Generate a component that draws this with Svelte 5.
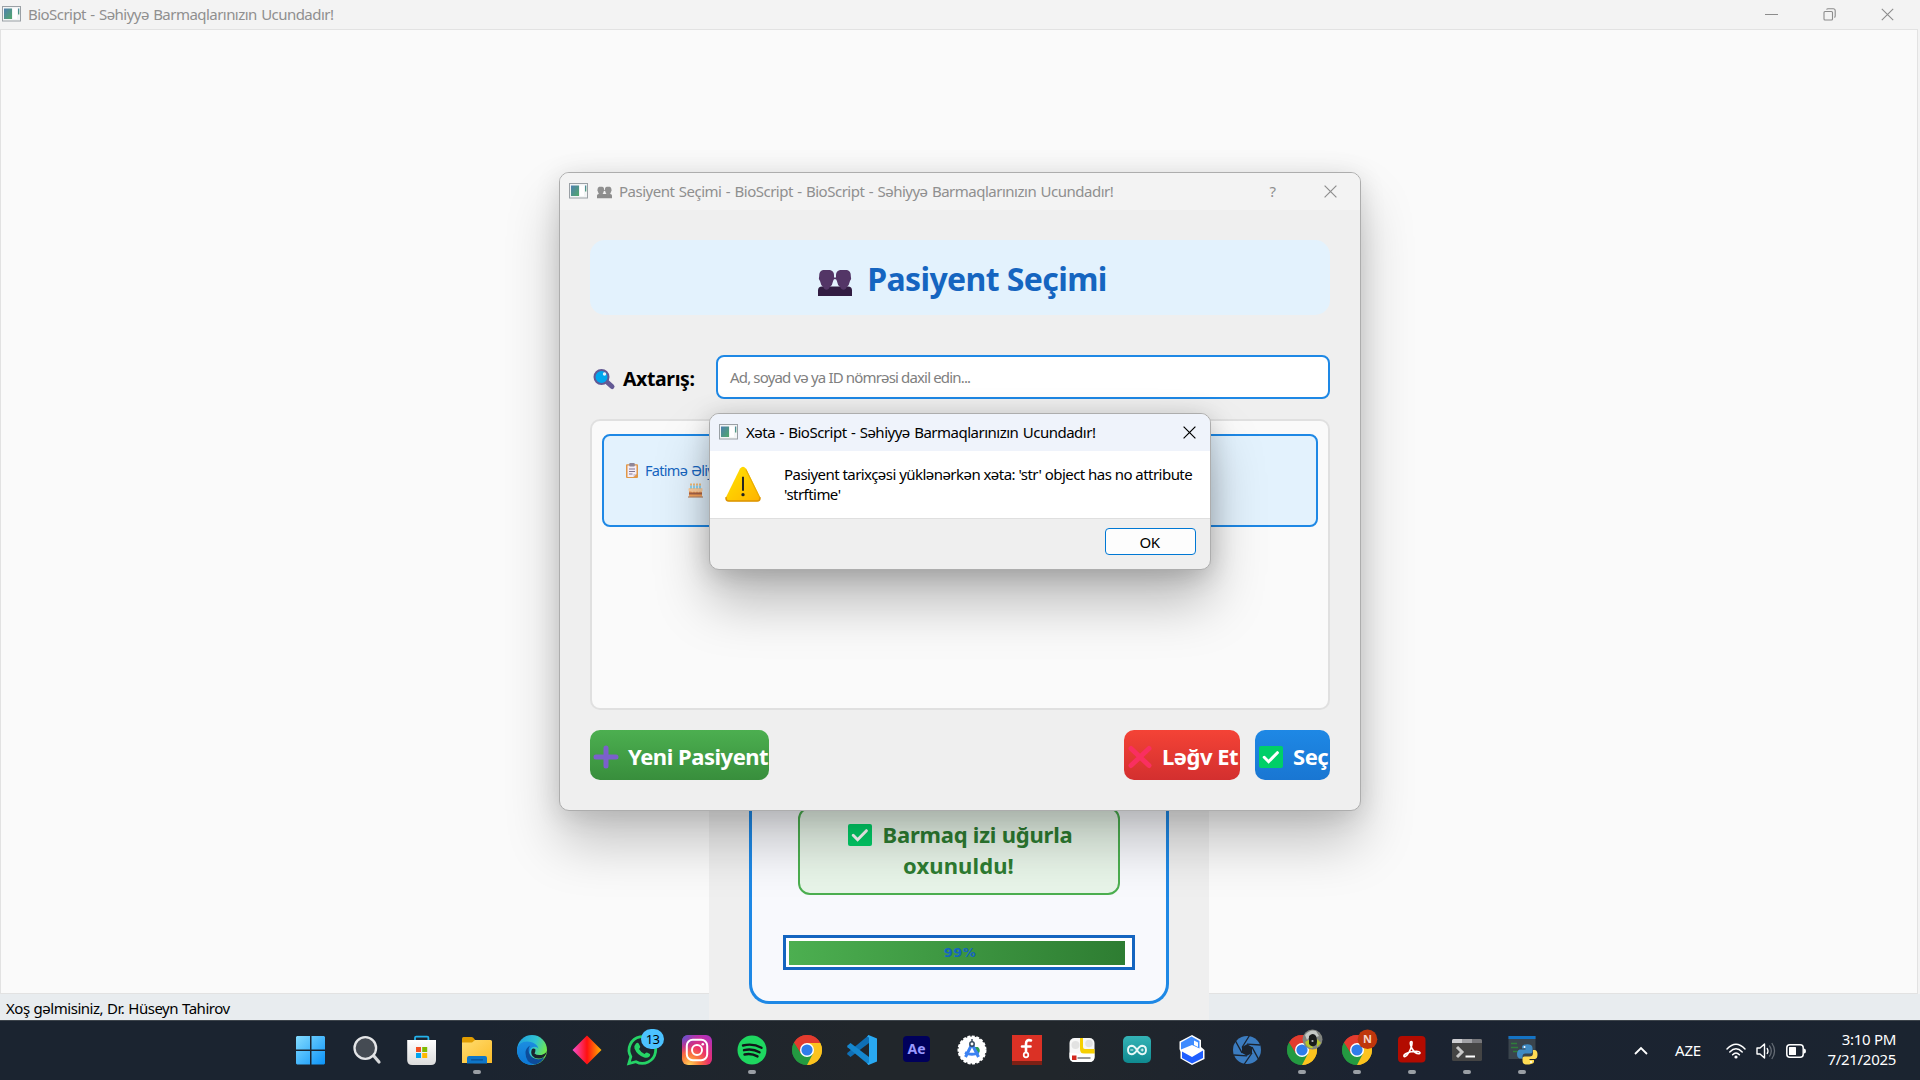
<script>
  const appTitle = 'BioScript - Səhiyyə Barmaqlarınızın Ucundadır!';
  const tasks = [
    { id: 'start' }, { id: 'search' }, { id: 'store' }, { id: 'files', open: true }, { id: 'edge' },
    { id: 'diamond' }, { id: 'whatsapp' }, { id: 'instagram' }, { id: 'spotify', open: true },
    { id: 'chrome' }, { id: 'vscode' }, { id: 'ae' }, { id: 'studio' }, { id: 'fritzing' },
    { id: 'lego' }, { id: 'arduino' }, { id: 'boxes' }, { id: 'aperture' },
    { id: 'chromePhoto', open: true }, { id: 'chromeN', open: true }, { id: 'acrobat', open: true },
    { id: 'terminal', open: true }, { id: 'python', open: true }
  ];
</script>

{#snippet winIcon()}
  <svg class="win-icon" viewBox="0 0 19 16">
    <rect x=".5" y=".5" width="18" height="14.5" fill="#f3f5f6" stroke="#9aa0a5" />
    <rect x="2" y="2.5" width="8" height="10.5" fill="url(#wi)" />
    <rect x="11" y="2.5" width="4" height="10.5" fill="#fff" />
    <rect x="16" y="2.5" width="1.3" height="6" fill="url(#wi)" />
  </svg>
{/snippet}

{#snippet people(head, body)}
  <svg class="people" viewBox="0 0 34 26">
    <path d="M0 26v-5.500q0-4 4-4h26q4 0 4 4V26z" fill={body} />
    <path d="M5 0h7q4 1 4 5v2.500h2V5q0-4 4-5h7q4 1 3.800 6 1 3-.8 5-.8 4.500-3.500 6.500l-1 1.500q-2 1.500-4 0l-1-1.500q-3-2-3.600-6.500-.4-2-2-2-1.300 0-1.800 2-.6 4.500-3.600 6.500l-1 1.500q-2 1.500-4 0l-1-1.500Q2.800 15.500 2 11 .2 9 1.200 6 1 1 5 0z" fill={head} />
  </svg>
{/snippet}

{#snippet check()}
  <svg class="emoji" viewBox="0 0 24 22">
    <rect width="24" height="22" rx="2" fill="#00cf68" />
    <path d="M5.200 11.300l4.400 4.400 8.800-9" fill="none" stroke="#fff" stroke-width="3" stroke-linecap="round" />
  </svg>
{/snippet}

{#snippet cross()}
  <svg class="close" viewBox="0 0 13 13"><path d="M.6 .6l11.800 11.800M12.400 .6L.6 12.400" fill="none" stroke="currentColor" stroke-width="1.200" /></svg>
{/snippet}

{#snippet chromeLogo()}
  <path d="M15 15L2.010 7.500A15 15 0 0 1 27.990 7.500z" fill="#e33b2e" />
  <path d="M15 15L27.990 7.500A15 15 0 0 1 15 30z" fill="#fcc31e" />
  <path d="M15 15L15 30A15 15 0 0 1 2.010 7.500z" fill="#1e8e3e" />
  <path d="M15 8h13.280A15 15 0 0 1 15 30l6.060-11.500z" fill="#fcc31e" />
  <path d="M21.060 18.500L15 30A15 15 0 0 1 2.010 7.500l6.930 11z" fill="#249a41" />
  <path d="M8.940 18.500L2.010 7.500A15 15 0 0 1 28.280 8H15z" fill="#e33b2e" />
  <circle cx="15" cy="15" r="7" fill="#fff" />
  <circle cx="15" cy="15" r="5.600" fill="#2f7de9" />
{/snippet}

{#snippet taskIcon(id)}
  {#if id === 'start'}
    <path d="M0 1H13V14.500H-1V2zM14.500 1h12.500l1 1v12.500H14.500zM-1 16h14v13.500H0l-1-1zM14.500 16H28v12.500l-1 1H14.500z" fill="url(#gwin)" />
  {:else if id === 'search'}
    <path d="M21 20l6 7" stroke="#d6d8da" stroke-width="3.200" stroke-linecap="round" />
    <circle cx="13.300" cy="13" r="10.800" fill="#454b53" stroke="#e4e5e7" stroke-width="2.300" />
  {:else if id === 'store'}
    <path d="M8 6V2.800q0-1.200 1.200-1.200h11q1.200 0 1.200 1.200V6" fill="none" stroke="#24b3ec" stroke-width="1.800" />
    <path d="M.2 5h28.800v20q0 5-5 5H5.200q-5 0-5-5z" fill="url(#gstore)" />
    <rect x="9" y="12" width="5" height="5" fill="#f25022" /><rect x="15.200" y="12" width="5" height="5" fill="#7fba00" />
    <rect x="9" y="18" width="5" height="5" fill="#00a4ef" /><rect x="15.200" y="18" width="5" height="5" fill="#ffb900" />
  {:else if id === 'files'}
    <path d="M0 3.500Q0 2 1.500 2h8q1 0 1.800.8L14 6v6H0z" fill="#e09c00" />
    <path d="M0 7.500h10L13 5h15.500Q30 5 30 6.500V28H0z" fill="url(#gfold)" />
    <path d="M5 28.500V23q0-2 2-2h16q2 0 2 2v5.500z" fill="#0f76c8" /><path d="M9.500 24.800h11" stroke="#0a4f92" stroke-width="1.200" stroke-linecap="round" />
  {:else if id === 'edge'}
    <circle cx="15" cy="15" r="15" fill="url(#gedge1)" />
    <path d="M0 14Q2 6.500 10 6.500c7 0 11 4 11.500 7.500-1.500-3-7-3.500-8.500 1-2 6 2 12 9.500 12Q17 31 11 29.500 0 26.500 0 14z" fill="url(#gedge2)" />
    <path d="M8.500 18q0-5 4.500-7.500-2.500 4-.5 8.500 3 6 11 5l4-2q-3 6-9.500 7.700Q8.500 28 8.500 18z" fill="#0d4c9b" />
    <path d="M17.500 18.500q2.500 2.200 7 1.400 4-.8 5.300-3.900-1 6-5.500 7.200-6 1.200-8.800-2.200-2.300-3-.5-7 2-1 3.500.5 0 2-1 4z" fill="#1b232d" />
  {:else if id === 'diamond'}
    <path d="M15 .5L29.500 15 15 29.500.5 15z" fill="url(#gdia)" />
  {:else if id === 'whatsapp'}
    <path d="M1.800 28.600l2-7A13.300 13.300 0 1 1 9 26.700z" fill="none" stroke="#25d366" stroke-width="2.800" />
    <path d="M9 8.500q1.500-1.500 2.700 0l1.500 3q.2 1-1.200 2.500 2 3.500 5.500 5 1.500-2 2.500-1.500l3 1.600q.8 1-.8 2.700-2 1.600-5 .6-7-2.300-9.700-9-.6-3 1.500-4.900z" fill="#25d366" />
  {:else if id === 'instagram'}
    <rect width="30" height="30" rx="6" fill="url(#gig)" /><rect width="30" height="30" rx="6" fill="url(#gig2)" />
    <rect x="4.800" y="4.800" width="20.400" height="20.400" rx="6" fill="none" stroke="#fff" stroke-width="2" />
    <circle cx="15" cy="15" r="5" fill="none" stroke="#fff" stroke-width="2" /><circle cx="20.800" cy="9.200" r="1.300" fill="#fff" />
  {:else if id === 'spotify'}
    <circle cx="15" cy="15" r="14.500" fill="#1ed760" />
    <path d="M6 10.500q10-2.500 18.500 2.300M7 15.200q8.500-2 15.500 2.100M7.500 19.500q7-1.500 13 1.900" fill="none" stroke="#11171a" stroke-width="2.400" stroke-linecap="round" />
  {:else if id === 'chrome'}
    {@render chromeLogo()}
  {:else if id === 'vscode'}
    <path d="M22 0v8L3.500 22 .5 19.500q-.8-.9 0-1.800z" fill="#0f6fb5" />
    <path d="M22 30v-8L3.500 8 .5 10.500q-.8.9 0 1.800z" fill="#1587cf" />
    <path d="M21.500 0L30 3.500v23L21.500 30 20 28.500l2-1V2.500L20 1.500z" fill="#29a9f2" />
  {:else if id === 'ae'}
    <rect x="1" y="1" width="27" height="26" rx="4" fill="#00005b" />
    <text x="14.500" y="18.700" class="ae">Ae</text>
  {:else if id === 'studio'}
    <circle cx="15" cy="15" r="13.500" fill="#fff" stroke="#fff" stroke-width="2" stroke-dasharray="3 1.500" />
    <path d="M17 12h4q3 3 1 6h-3z" fill="#2c9c56" />
    <path d="M15 9L8.500 22M15 9l6.500 13M8 17.500q7 3.500 13.500 0" fill="none" stroke="#3c82f2" stroke-width="3" />
    <path d="M15 4v4" stroke="#3c4b5c" stroke-width="1.500" /><circle cx="15" cy="9" r="2.200" fill="#fff" stroke="#34495e" stroke-width="1.500" />
  {:else if id === 'fritzing'}
    <rect width="30" height="30" fill="#db3125" /><rect y="26" width="30" height="4" fill="#7d2015" />
    <path d="M19 5.500q-5-1.500-5 3.500v9M10 11.500h8.500" fill="none" stroke="#fff" stroke-width="2.600" stroke-linecap="round" />
    <circle cx="14" cy="20" r="2.300" fill="#db3125" stroke="#fff" stroke-width="1.700" />
  {:else if id === 'lego'}
    <rect x="2.500" y="3" width="25" height="24" rx="5" fill="#f7f7f7" /><path d="M13 3h3v9q0 2 2 2h9.500v5H18q-5 0-5-5z" fill="#f6cf00" />
    <circle cx="8.500" cy="10" r="4" fill="#e2e2e2" /><circle cx="22" cy="8.500" r="3.800" fill="#e2e2e2" />
    <path d="M2.500 17.500q6 1.500 12 1h13v3.500q0 5-5 5h-15q-5 0-5-5z" fill="#fff" />
    <rect x="5" y="20.500" width="4.500" height="4.500" fill="#d3281e" /><path d="M10.500 23h13" stroke="#777" stroke-width="1.500" />
  {:else if id === 'arduino'}
    <rect x="1" y="1" width="28" height="27" rx="5" fill="url(#gard)" />
    <path d="M15 15q-2.500-4.300-5.300-4.300Q6 11 6 15t3.700 4.300Q12.500 19.300 15 15q2.500-4.300 5.300-4.300Q24 11 24 15t-3.700 4.300Q17.500 19.300 15 15z" fill="none" stroke="#e8f7f7" stroke-width="1.900" />
    <path d="M8.300 15h3M18.700 15h3M20.200 13.500v3" stroke="#e8f7f7" stroke-width="1" />
  {:else if id === 'boxes'}
    <path d="M15 0l9 5v7l3.500 3v9L15 30 3.500 23.500V17L2.500 14V6.500z" fill="#fff" />
    <path d="M14.500 1.500L22.500 6v7.500L15 10 4 14.500V7.500z" fill="#3f8cff" /><path d="M17 5.500l4 2V12L17 10z" fill="#fff" />
    <path d="M5 16.500l10 5.500 11-6.500V23L15 28.500 5 23z" fill="#1f5eff" /><path d="M6.500 15L14.500 11.500 24 15 15 19.500z" fill="#fff" />
  {:else if id === 'aperture'}
    <circle cx="15" cy="15" r="14" fill="#3b7cc0" />
    <path d="M15 9.200l5 2.900v5.800l-5 2.900-5-2.900v-5.800z" fill="#1b232d" />
    <path d="M10 12.500L17.500.5M15 9.200l13.500.8M20 12.100l6.500 12M20 17.900L12 29.500M15 20.800L1.500 20M10 17.900L3.500 6" stroke="#1b232d" stroke-width="1.300" />
  {:else if id === 'chromePhoto'}
    {@render chromeLogo()}
    <circle cx="25.500" cy="4.500" r="10" fill="#81847e" />
    <path d="M18 0q5-6 11-4l3 5-5 2-4-2-3 4z" fill="#c5c9c5" /><path d="M18 7l5-3 3 9q-6 1-8-6zM30 4l4 4-4 4z" fill="#b7c62b" />
    <path d="M22 1q4-4 7 0 2 5 0 9-4 3-7-1z" fill="#191c1b" /><circle cx="25.500" cy="6" r="1.100" fill="#b9b9b9" />
  {:else if id === 'chromeN'}
    {@render chromeLogo()}
    <circle cx="25.500" cy="4.300" r="9.800" fill="#bf360c" /><text x="25.500" y="8" class="en">N</text>
  {:else if id === 'acrobat'}
    <rect x="1" y="1" width="27.500" height="26.500" rx="4" fill="#b30b00" />
    <path d="M14.500 6.500c-2 0-1.200 4 .5 7 2 3.500 5 5.500 7 5.300 1.800-.3 1.200-2.500-2.300-2.600-4 0-8.300 1-11 2.600-2.500 1.500-2.300 3.300-.6 2.700 2.500-1 5.500-6.500 6.600-11 .5-2.300.6-4-.2-4z" fill="none" stroke="#fff" stroke-width="1.600" />
  {:else if id === 'terminal'}
    <rect y="4" width="30" height="22" rx="1.500" fill="#444" /><path d="M0 8V5.500Q0 4 1.500 4H10v4z" fill="#cfcfd3" /><path d="M10 4h10v4H10z" fill="#a2a2a6" /><path d="M20 4h8.500Q30 4 30 5.500V8H20z" fill="#77777b" />
    <path d="M5 12l5 5-5 5" fill="none" stroke="#c8c8c8" stroke-width="3" /><path d="M13.500 21.500H23" stroke="#fff" stroke-width="2" />
  {:else if id === 'python'}
    <rect x="1.500" y="1" width="27" height="23" fill="#3a444c" /><rect x="1.500" y="1" width="27" height="3" fill="#1473c4" />
    <path d="M4 8.500h6M4 12.500h7M6 16.500h6" stroke="#2f7d3b" stroke-width="1.400" />
    <path d="M16.500 10q4-1.500 7.500 0 1.500 1 1.500 3v3.500q0 2-2 2h-5q-3 0-3 3v2h-3q-2.500-1-2.500-4.500t2.500-4.500h6v-1H15v-1.700q0-1.200 1.500-1.800z" fill="#3f8bc4" />
    <path d="M24 29q-4 1-7 0-1.500-1-1.500-3v-2.500q0-2 2-2h5q3.500 0 3.500-3.500V15h2q2.500.5 2.500 4.500T28 24h-5.500v1H27v2q0 1.500-3 2z" fill="#ffdc53" />
    <circle cx="17.500" cy="12" r="1" fill="#fff" /><circle cx="24" cy="27" r="1" fill="#fff" />
  {/if}
{/snippet}

<div class="desktop">
  <svg class="defs" width="0" height="0">
    <defs>
      <linearGradient id="wi" x1="0" y1="0" x2="1" y2="1"><stop offset="0" stop-color="#4e7fb0" /><stop offset="1" stop-color="#51a86a" /></linearGradient>
      <linearGradient id="gwin" x1="0" y1="0" x2="1" y2="1"><stop offset="0" stop-color="#84dcff" /><stop offset="1" stop-color="#0b93f8" /></linearGradient>
      <linearGradient id="gstore" x1="0" y1="0" x2="0" y2="1"><stop offset="0" stop-color="#fff" /><stop offset="1" stop-color="#dcdcdc" /></linearGradient>
      <linearGradient id="gfold" x1="0" y1="0" x2="1" y2="1"><stop offset="0" stop-color="#ffdc70" /><stop offset="1" stop-color="#fcbc28" /></linearGradient>
      <linearGradient id="gedge1" x1="0" y1="0" x2="1" y2=".4"><stop offset="0" stop-color="#1d9be0" /><stop offset=".6" stop-color="#30c3d2" /><stop offset="1" stop-color="#6fe84e" /></linearGradient>
      <linearGradient id="gedge2" x1="0" y1="0" x2="0" y2="1"><stop offset="0" stop-color="#1c8de0" /><stop offset="1" stop-color="#0c77d6" /></linearGradient>
      <linearGradient id="gdia"><stop offset="0" stop-color="#f54fd0" /><stop offset=".5" stop-color="#ff1010" /><stop offset="1" stop-color="#ffb400" /></linearGradient>
      <radialGradient id="gig" cx=".25" cy="1" r="1.100"><stop offset="0" stop-color="#ffd25a" /><stop offset=".3" stop-color="#fb7a3c" /><stop offset=".6" stop-color="#ea2f6c" /><stop offset="1" stop-color="#b331b8" /></radialGradient>
      <radialGradient id="gig2" cx="0" cy="0" r=".6"><stop offset="0" stop-color="#4a5fd8" /><stop offset="1" stop-color="#8a3ac8" stop-opacity="0" /></radialGradient>
      <linearGradient id="gard" x1="0" y1="0" x2="0" y2="1"><stop offset="0" stop-color="#34b3b6" /><stop offset="1" stop-color="#0f8a90" /></linearGradient>
      <linearGradient id="gwarn" x1="0" y1="0" x2="1" y2="1"><stop offset="0" stop-color="#ffe500" /><stop offset="1" stop-color="#ffb200" /></linearGradient>
    </defs>
  </svg>

  <main class="app">
    <header class="app-bar">
      {@render winIcon()}
      <span class="t-app">{appTitle}</span>
      <div class="controls">
        <svg viewBox="0 0 13 13"><path d="M0 6.500h13" stroke="#8c8c8c" /></svg>
        <svg viewBox="0 0 13 13"><path d="M1 4.500q0-1 1-1h6.500q1 0 1 1V11q0 1-1 1H2q-1 0-1-1zM3.500 1.500q.5-.8 1.500-.8h5.200q2 0 2 2V8q0 1-.8 1.500" fill="none" stroke="#8c8c8c" stroke-width="1.100" /></svg>
        <svg viewBox="0 0 13 13"><path d="M.8 .8l11.400 11.400M12.200 .8L.8 12.200" stroke="#8c8c8c" stroke-width="1.100" /></svg>
      </div>
    </header>
    <div class="canvas"></div>
    <footer class="status"><span>Xoş gəlmisiniz, Dr. Hüseyn Tahirov</span></footer>
  </main>

  <section class="scan">
    <div class="scan-card">
      <div class="result">
        <div class="line">{@render check()}<span class="r1">Barmaq izi uğurla</span></div>
        <div class="line"><span class="r2">oxunuldu!</span></div>
      </div>
      <div class="progress"><div class="chunk"></div><span>99%</span></div>
    </div>
  </section>

  <section class="dialog">
    <header class="bar">
      {@render winIcon()}
      {@render people('#909090', '#8c8c8c')}
      <span class="t-dialog">Pasiyent Seçimi - BioScript - {appTitle}</span>
      <span class="help">?</span>
      {@render cross()}
    </header>
    <div class="body">
      <h1>{@render people('#533566', '#321d42')}<span>Pasiyent Seçimi</span></h1>
      <div class="search">
        <svg class="lens" viewBox="0 0 22 20">
          <path d="M14 13l5 4.500" stroke="#635994" stroke-width="5" stroke-linecap="round" />
          <circle cx="8.500" cy="8" r="7" fill="#00a6ed" stroke="#635994" stroke-width="2" />
          <circle cx="11.500" cy="5" r="1.700" fill="#e4f4fd" />
        </svg>
        <span class="label">Axtarış:</span>
        <div class="input"><span>Ad, soyad və ya ID nömrəsi daxil edin...</span></div>
      </div>
      <div class="list">
        <div class="patient">
          <div class="p-line">
            <svg class="clip" viewBox="0 0 12 15"><rect y="1.200" width="12" height="13.800" rx="1" fill="#e19747" /><path d="M1.500 2.500h9V11l-3 3h-6z" fill="#f3eef8" /><path d="M7.500 14v-3h3z" fill="#cdc4d6" /><rect x="3.200" width="5.600" height="3.500" rx="1" fill="#8f8798" /><path d="M3 6h6M3 8.500h6M3 11h3.500" stroke="#83758f" stroke-width="1.200" /></svg>
            <span>Fatimə Əliyeva</span>
          </div>
          <div class="p-line second">
            <svg class="cake" viewBox="0 0 15 15"><rect x="1" y="6" width="13" height="8" rx="1" fill="#f9a55c" /><path d="M1 9.500h13v2H1z" fill="#a8644a" /><path d="M.5 6q0-1 1-1h12q1 0 1 1v2q-1 2-2.500.3-1.500 2-3 0-1.500 2-3 0-1.500 2-3 0Q.5 9 .5 7z" fill="#ffd0a0" /><path d="M0 14h15" stroke="#b9896a" stroke-width="1.200" /><path d="M3 2.500V5.500M6 2.500V5.500M9 2.500V5.500M12 2.500V5.500" stroke="#35b7e8" /><path d="M3 .5v2M6 .5v2M9 .5v2M12 .5v2" stroke="#ff9f2e" stroke-width="1.300" /></svg>
            <span>15.05.1990</span>
          </div>
        </div>
      </div>
      <div class="actions">
        <button class="new"><svg class="emoji" viewBox="0 0 24 22"><path d="M12 2v18M2 11h20" stroke="#7b60cc" stroke-width="5" stroke-linecap="round" /></svg><span>Yeni Pasiyent</span></button>
        <button class="cancel"><svg class="emoji" viewBox="0 0 24 22"><path d="M3 2.500l18 17M21 2.500l-18 17" stroke="#f92f60" stroke-width="5" stroke-linecap="round" /></svg><span>Ləğv Et</span></button>
        <button class="pick">{@render check()}<span>Seç</span></button>
      </div>
    </div>
  </section>

  <section class="message">
    <header class="bar">
      {@render winIcon()}
      <span class="t-msg">Xəta - {appTitle}</span>
      {@render cross()}
    </header>
    <div class="msg-body">
      <svg class="warn" viewBox="0 0 37 37"><path d="M15.500 2.500q3-3.500 6 0L36 32q1 4-3 4.300H4Q0 36 1 32z" fill="url(#gwarn)" /><path d="M1.200 32Q.5 36 4 36h29q3.500 0 2.800-4" fill="none" stroke="#dc9405" stroke-width="1.600" /><path d="M21.500 3.500L35.500 32" stroke="#e8ad00" stroke-width="1.200" /><path d="M18.500 11v14.500" stroke="#222" stroke-width="2" /><circle cx="18.500" cy="29.500" r="1.700" fill="#222" /></svg>
      <p><span class="m1">Pasiyent tarixçəsi yüklənərkən xəta: 'str' object has no attribute</span><br /><span class="m2">'strftime'</span></p>
    </div>
    <footer><button>OK</button></footer>
  </section>

  <nav class="taskbar">
    <div class="tasks">
      {#each tasks as t}
        <div class="task">
          <svg viewBox="0 0 30 30">{@render taskIcon(t.id)}</svg>
          {#if t.id === 'whatsapp'}<span class="badge">13</span>{/if}
          {#if t.open}<i></i>{/if}
        </div>
      {/each}
    </div>
    <div class="tray">
      <svg class="chev" viewBox="0 0 14 8"><path d="M1 7l6-6 6 6" fill="none" stroke="#fff" stroke-width="1.800" /></svg>
      <span class="lang">AZE</span>
      <svg class="wifi" viewBox="0 0 20 16"><path d="M1 6q9-9.500 18 0M3.800 9q6.200-6.500 12.400 0M6.600 11.700q3.400-3.500 6.800 0" fill="none" stroke="#fff" stroke-width="1.500" stroke-linecap="round" /><circle cx="10" cy="14" r="1.600" fill="#fff" /></svg>
      <svg class="vol" viewBox="0 0 20 18"><path d="M1 6h3l4.500-4v14L4 12H1z" fill="none" stroke="#fff" stroke-width="1.400" stroke-linejoin="round" /><path d="M11 6q2 3 0 6" fill="none" stroke="#fff" stroke-width="1.300" /><path d="M13.300 3.500q4 5.500 0 11M15.800 1q5.500 8 0 16" fill="none" stroke="#656c75" stroke-width="1.300" /></svg>
      <svg class="bat" viewBox="0 0 20 14"><rect x=".8" y=".8" width="16.400" height="12.400" rx="3" fill="none" stroke="#fff" stroke-width="1.500" /><rect x="3" y="3" width="7" height="8" rx=".5" fill="#fff" /><path d="M18 4.500q2 0 2 2.500t-2 2.500z" fill="#fff" /></svg>
      <div class="clock"><span class="time">3:10 PM</span><span class="date">7/21/2025</span></div>
    </div>
  </nav>
</div>

<style>
  :global(body) { overflow: hidden; }
  .desktop {
    position: relative; width: 1920px; height: 1080px; overflow: hidden;
    font-family: 'Noto Sans', 'Open Sans', sans-serif; font-size: 15px; line-height: 20px; white-space: nowrap; color: #000;
    display: flex; flex-direction: column;
  }
  * { box-sizing: border-box; }
  svg { flex: none; display: block; overflow: visible; }
  .defs { position: absolute; }
  button { font: inherit; padding: 0; border: 0; }

  .app { height: 1020px; display: flex; flex-direction: column; background: #f3f3f3; }
  .app-bar { height: 29px; display: flex; align-items: center; padding: 0 20px 1px 2px; color: #8f8f8f; }
  .win-icon { width: 19px; height: 16px; }
  .t-app { margin: -1px 0 0 7px; letter-spacing: -0.54px; word-spacing: 1px; }
  .controls { margin-left: auto; display: flex; gap: 45px; padding-right: 6px; }
  .controls svg { width: 13px; height: 13px; }
  .canvas { flex: 1; margin-right: 2px; background: #fafafa; border: 1px solid #e2e2e2; }
  .status { height: 26px; background: #e8ecef; padding: 4px 6px 0; letter-spacing: -0.46px; word-spacing: 0.4px; }

  .scan { position: absolute; left: 709px; top: 780px; width: 500px; height: 240px; background: #efefef; padding: 0 40px 16px; display: flex; }
  .scan-card { flex: 1; border: 3px solid #1e88e5; border-top: 0; border-radius: 0 0 20px 20px; background: #f8f9fd; padding: 27px 31px 31px; display: flex; flex-direction: column; align-items: center; justify-content: space-between; }
  .result { width: 322px; height: 88px; border: 2px solid #4caf50; border-radius: 12px; background: #e8f5e9; color: #2e7d32; font-weight: 700; font-size: 22px; line-height: 31px; padding: 10px 0 0 2px; }
  .line { display: flex; justify-content: center; align-items: center; gap: 11px; }
  .emoji { width: 24px; height: 22px; }
  .r1 { letter-spacing: -0.22px; }
  .r2 { letter-spacing: 0.1px; margin-right: 3px; }
  .progress { width: 352px; height: 35px; border: 3px solid #1565c0; background: #fff; padding: 3px; display: grid; }
  .chunk { grid-area: 1 / 1; width: 336px; background: linear-gradient(90deg, #4caf50, #2e7d32); }
  .progress span { grid-area: 1 / 1; text-align: center; color: #1565c0; font-weight: 700; font-family: 'DejaVu Sans', sans-serif; font-size: 13px; line-height: 24px; letter-spacing: 0.4px; padding-left: 2px; }

  .dialog, .message { position: absolute; border: 1px solid #adadad; border-radius: 10px; overflow: hidden; display: flex; flex-direction: column; background: #efefef; }
  .dialog { left: 559px; top: 172px; width: 802px; height: 639px; box-shadow: 0 32px 54px rgba(0, 0, 0, 0.22), 0 4px 26px rgba(0, 0, 0, 0.12); }
  .bar { height: 37px; flex: none; display: flex; align-items: center; }
  .close { width: 13px; height: 13px; margin-top: -1px; }
  .dialog .bar { background: #f3f3f3; color: #8f8f8f; padding: 0 23px 0 9px; }
  .bar .win-icon { margin-top: -1px; }
  .bar .people { width: 15px; height: 13px; margin: 2px 7px 0 9px; }
  .t-dialog, .t-msg { margin-top: -2px; letter-spacing: -0.5px; word-spacing: 1px; }
  .help { margin: -2px 48px 0 auto; }
  .body { flex: 1; padding: 30px; display: flex; flex-direction: column; }
  h1 { margin: 0 0 40px; height: 75px; border-radius: 15px; background: #e3f2fd; display: flex; align-items: center; justify-content: center; gap: 15px; font-size: 32px; line-height: 44px; color: #1565c0; padding: 2px 0 0 5px; }
  h1 .people { width: 34px; height: 26px; margin-top: 8px; }
  h1 span { letter-spacing: -0.6px; }
  .search { height: 44px; display: flex; align-items: center; }
  .lens { width: 22px; height: 20px; margin: 4px 8px 0 3px; }
  .label { font-size: 19.500px; font-weight: 700; line-height: 26px; margin-top: 3px; width: 93px; letter-spacing: -0.4px; }
  .input { height: 44px; width: 614px; margin-left: auto; border: 2px solid #1e88e5; border-radius: 8px; background: #fff; padding: 10px 12px; color: #808080; letter-spacing: -0.84px; }
  .list { margin: 20px 0; height: 291px; border: 2px solid #e0e0e0; border-radius: 10px; background: #fafafa; padding: 13px 10px; }
  .patient { height: 93px; border: 2px solid #1e88e5; border-radius: 8px; background: #e3f2fd; color: #1565c0; padding: 24px 22px; font-size: 14.500px; letter-spacing: -0.7px; }
  .p-line { display: flex; align-items: center; gap: 7px; word-spacing: 1px; }
  .p-line.second { padding-left: 62px; gap: 5px; }
  .clip { width: 12px; height: 15px; }
  .cake { width: 15px; height: 15px; }
  .actions { display: flex; gap: 15px; }
  .actions button { height: 50px; border-radius: 10px; color: #fff; font-weight: 700; font-size: 22px; line-height: 30px; display: flex; align-items: center; gap: 10px; padding: 4px 0 0 4px; overflow: hidden; white-space: nowrap; letter-spacing: -0.48px; }
  .actions span { margin-top: -3px; }
  .new { width: 179px; background: linear-gradient(#4caf50, #388e3c); }
  .cancel { width: 116px; margin-left: auto; background: linear-gradient(#f44336, #d32f2f); }
  .pick { width: 75px; background: linear-gradient(#1e88e5, #1976d2); }

  .message { left: 709px; top: 413px; width: 502px; height: 157px; box-shadow: 0 32px 54px rgba(0, 0, 0, 0.26), 0 4px 26px rgba(0, 0, 0, 0.18); }
  .message .bar { background: #eff3fb; padding: 0 14px 0 9px; }
  .t-msg { margin: -2px auto 0 8px; }
  .msg-body { height: 68px; background: #fff; border-bottom: 1px solid #dfdfdf; display: flex; padding-left: 15px; }
  .warn { width: 36px; height: 36px; margin-top: 15px; }
  p { margin: 13px 0 0 23px; }
  .m1, .m2 { letter-spacing: -0.54px; }
  .message footer { padding: 9px 14px; display: flex; justify-content: flex-end; }
  .message button { width: 91px; height: 27px; border: 1px solid #0078d4; border-radius: 4px; background: #fdfdfd; letter-spacing: -0.6px; padding: 1px 2px 0 0; }

  .taskbar { height: 60px; background: linear-gradient(90deg, #1b2430 0%, #1b2430 25%, #21262b 45%, #21262b 55%, #1b2331 72%, #1b2430 100%); border-top: 1px solid #3d444b; display: flex; padding: 0 24px 0 284px; color: #fff; }
  .tasks { display: flex; }
  .task { position: relative; width: 55px; display: flex; flex-direction: column; align-items: center; padding-top: 14px; }
  .task svg { width: 30px; height: 30px; }
  .task i { width: 8px; height: 4px; border-radius: 2px; background: #9a9fa5; margin-top: 5px; }
  .badge { position: absolute; left: 27px; top: 8px; width: 23px; height: 20px; border-radius: 10px; background: #4cc2ff; color: #000; font-size: 13px; line-height: 20px; text-align: center; letter-spacing: -0.8px; }
  .ae { font: 700 14px 'Noto Sans', sans-serif; fill: #9999ff; text-anchor: middle; }
  .en { font: 700 11px 'Noto Sans', sans-serif; fill: #f5d5cb; text-anchor: middle; }
  .tray { margin-left: auto; display: flex; align-items: center; }
  .chev { width: 14px; height: 8px; margin-right: 27px; }
  .lang { width: 28px; letter-spacing: -0.2px; margin: -1px 23px 0 0; }
  .wifi { width: 20px; height: 16px; margin-right: 10px; }
  .vol { width: 20px; height: 18px; margin-right: 10px; }
  .bat { width: 20px; height: 14px; }
  .clock { width: 90px; display: flex; flex-direction: column; align-items: flex-end; letter-spacing: -0.3px; margin-top: -4px; }
</style>
